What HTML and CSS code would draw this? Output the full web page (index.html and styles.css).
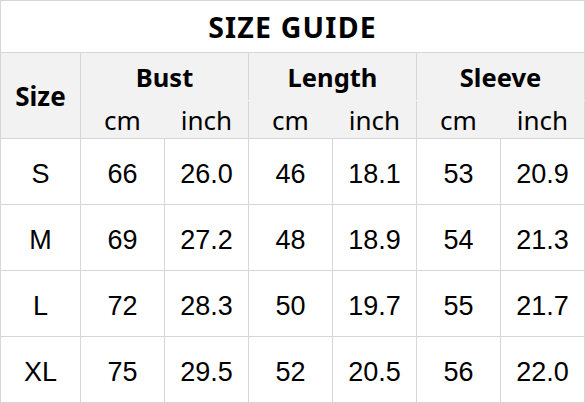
FILE: index.html
```html
<!DOCTYPE html>
<html>
<head>
<meta charset="utf-8">
<link rel="stylesheet" href="styles.css">
</head>
<body>
<table class="guide">
  <colgroup>
    <col class="c-size">
    <col class="c-val"><col class="c-val">
    <col class="c-val"><col class="c-val">
    <col class="c-val"><col class="c-val">
  </colgroup>
  <thead>
    <tr class="title-row"><th colspan="7" class="title">SIZE GUIDE</th></tr>
    <tr class="head-top">
      <th rowspan="2" class="head-size">Size</th>
      <th colspan="2" class="group">Bust</th>
      <th colspan="2" class="group">Length</th>
      <th colspan="2" class="group">Sleeve</th>
    </tr>
    <tr class="head-sub">
      <th class="unit first">cm</th><th class="unit last">inch</th>
      <th class="unit first">cm</th><th class="unit last">inch</th>
      <th class="unit first">cm</th><th class="unit last">inch</th>
    </tr>
  </thead>
  <tbody>
    <tr><td>S</td><td>66</td><td>26.0</td><td>46</td><td>18.1</td><td>53</td><td>20.9</td></tr>
    <tr><td>M</td><td>69</td><td>27.2</td><td>48</td><td>18.9</td><td>54</td><td>21.3</td></tr>
    <tr><td>L</td><td>72</td><td>28.3</td><td>50</td><td>19.7</td><td>55</td><td>21.7</td></tr>
    <tr><td>XL</td><td>75</td><td>29.5</td><td>52</td><td>20.5</td><td>56</td><td>22.0</td></tr>
  </tbody>
</table>
</body>
</html>
```

FILE: styles.css
```css
html, body {
  margin: 0;
  padding: 0;
  background: #ffffff;
}

.guide {
  border-collapse: collapse;
  table-layout: fixed;
  width: 585px;
  color: #000000;
}

.c-size { width: 80px; }
.c-val { width: 84px; }

.guide th,
.guide td {
  border: 1px solid #d6d6d6;
  padding: 0;
  text-align: center;
  vertical-align: middle;
}

.title-row { height: 52px; }

.title {
  font-family: "Noto Sans", sans-serif;
  font-weight: 700;
  font-size: 28.5px;
  letter-spacing: 1.2px;
  padding-top: 2px;
  background: #ffffff;
}

.head-top th,
.head-sub th {
  background: #f2f2f2;
}

.head-top { height: 48px; }
.head-sub { height: 38px; }

.head-size {
  font-family: "Noto Sans", sans-serif;
  font-weight: 700;
  font-size: 26px;
}

.group {
  font-family: "Noto Sans", sans-serif;
  font-weight: 700;
  font-size: 25.5px;
  padding-top: 4px;
}

.head-top .group { border-bottom-color: #f2f2f2; }

.unit {
  font-family: "Noto Sans", sans-serif;
  font-weight: 400;
  font-size: 26px;
  border-top-color: #f2f2f2;
  vertical-align: top;
  line-height: 30px;
}

.unit.first { border-right-color: #f2f2f2; }
.unit.last { border-left-color: #f2f2f2; }

.guide tbody tr { height: 66px; }

.guide td {
  font-family: "Liberation Sans", Arial, sans-serif;
  font-size: 27px;
  padding-top: 5px;
}
```
